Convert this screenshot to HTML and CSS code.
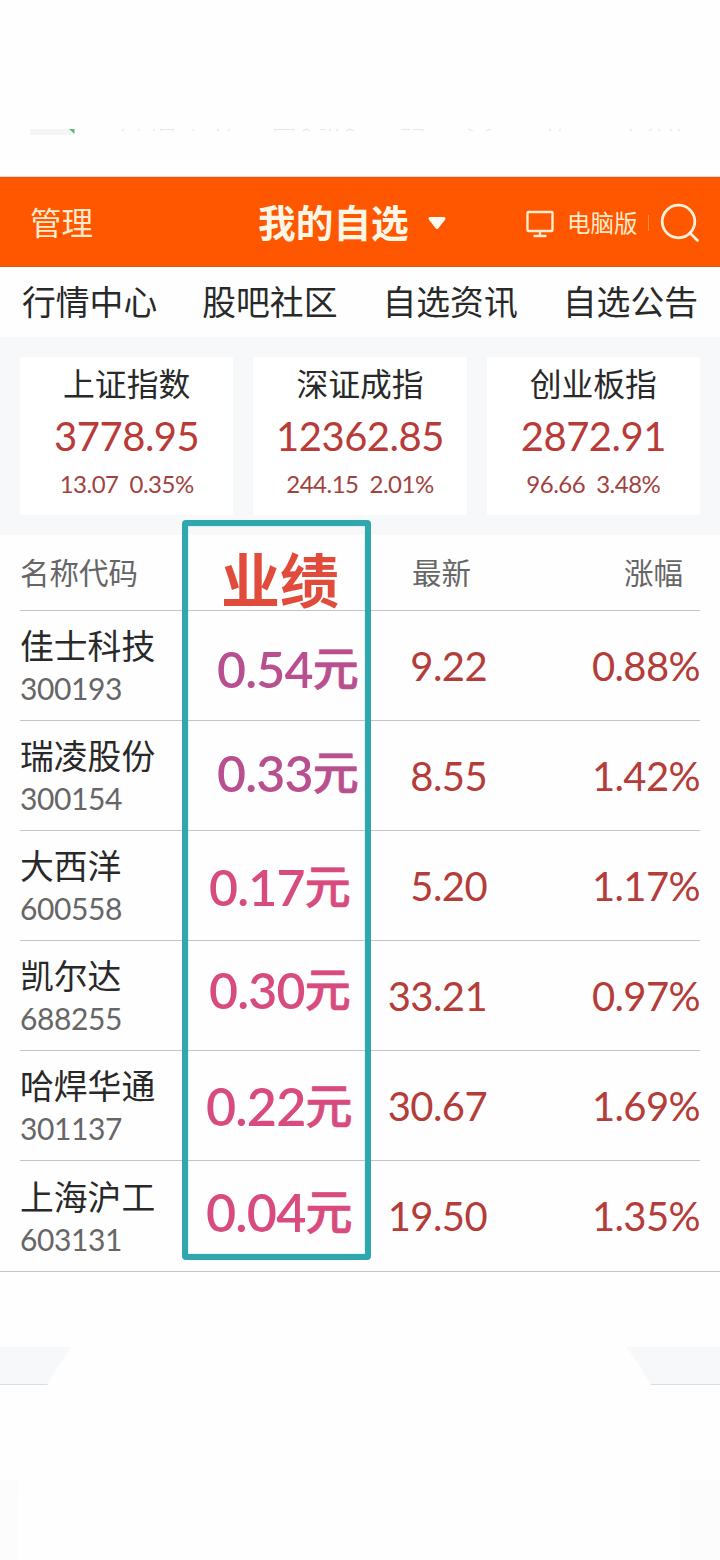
FILE: index.html
```html
<!DOCTYPE html>
<html lang="zh-CN">
<head>
<meta charset="utf-8">
<title>我的自选</title>
<link rel="stylesheet" href="styles.css">
</head>
<body>
<div class="screen">
  <div class="top-space">
    <svg class="remnants" width="720" height="10" viewBox="0 0 720 10">
      <path d="M30 1h39l5 6H30z" fill="#f3f5f6"/>
      <path d="M69 1h5.500v5z" fill="#60b77b"/>
      <g fill="none" stroke="#e6e7e8" stroke-width="1.200">
        <path d="M124 1l-2 2M139 1v2M154 1v2M160 1.500h14M161 1v2M173 1v2M193 1v2M217 1l2 2M230 1l-2 2M274 1.500h20M275 1v2M294 1v2M303 3l3-2 4 2M320 1.500h6M331 1l-2 2M338 1l-2 2M346 3l4-2 4 2M401 1.500h9M413 1.500h10M423 1v2M468 1l5 2M491 1l-5 2M549 1l2 2M561 1l-2 2M630 1l2 2M652 1l-3 2"/>
        <path d="M658 1l2 2M670 1l2 2M678 1l2 2" stroke="#f6e4d8"/>
      </g>
    </svg>
  </div>
  <header class="bar">
    <span class="manage">管理</span>
    <h1 class="title">我的自选</h1>
    <svg class="caret" width="20" height="15" viewBox="0 0 20 15"><path d="M3 2.500h14L10 11.500z" fill="#fffaf0" stroke="#fffaf0" stroke-width="3" stroke-linejoin="round"/></svg>
    <svg class="monitor" width="28" height="28" viewBox="0 0 28 28" fill="none" stroke="#ffecd0" stroke-width="2.400"><rect x="1.500" y="2" width="25" height="19" rx="1"/><path d="M14 21v4.500M7.500 26h13"/></svg>
    <span class="desktop">电脑版</span>
    <i class="sep"></i>
    <svg class="search" width="40" height="40" viewBox="0 0 40 40" fill="none" stroke="#fff0da" stroke-width="2.800" stroke-linecap="round"><circle cx="18.500" cy="18.500" r="16.300"/><path d="M30 30l7.500 7.500"/></svg>
  </header>
  <nav class="tabs"><span>行情中心</span><span>股吧社区</span><span>自选资讯</span><span>自选公告</span></nav>
  <section class="indices">
    <div class="card"><div class="card-name">上证指数</div><div class="card-value">3778.95</div><div class="card-change"><span>13.07</span><span>0.35%</span></div></div>
    <div class="card"><div class="card-name">深证成指</div><div class="card-value">12362.85</div><div class="card-change"><span>244.15</span><span>2.01%</span></div></div>
    <div class="card"><div class="card-name">创业板指</div><div class="card-value">2872.91</div><div class="card-change"><span>96.66</span><span>3.48%</span></div></div>
  </section>
  <main class="quotes">
    <div class="row head"><span class="label">名称代码</span><span class="latest">最新</span><span class="rise">涨幅</span></div>
    <div class="row"><div class="stock"><b>佳士科技</b><small>300193</small></div><span class="latest">9.22</span><span class="rise">0.88%</span></div>
    <div class="row"><div class="stock"><b>瑞凌股份</b><small>300154</small></div><span class="latest">8.55</span><span class="rise">1.42%</span></div>
    <div class="row"><div class="stock"><b>大西洋</b><small>600558</small></div><span class="latest">5.20</span><span class="rise">1.17%</span></div>
    <div class="row"><div class="stock"><b>凯尔达</b><small>688255</small></div><span class="latest">33.21</span><span class="rise">0.97%</span></div>
    <div class="row"><div class="stock"><b>哈焊华通</b><small>301137</small></div><span class="latest">30.67</span><span class="rise">1.69%</span></div>
    <div class="row last"><div class="stock"><b>上海沪工</b><small>603131</small></div><span class="latest">19.50</span><span class="rise">1.35%</span></div>
  </main>
  <div class="bottom">
    <div class="band"></div>
    <div class="foot"></div>
    <div class="oval"></div>
  </div>
  <div class="frame"></div>
  <div class="note note-title">业绩</div>
  <div class="note violet n1">0.54<em>元</em></div>
  <div class="note violet n2">0.33<em>元</em></div>
  <div class="note n3">0.17<em>元</em></div>
  <div class="note n4">0.30<em>元</em></div>
  <div class="note large n5">0.22<em>元</em></div>
  <div class="note large n6">0.04<em>元</em></div>
</div>
</body>
</html>
```
FILE: styles.css
```css
* { box-sizing: border-box; }
body { margin: 0; background: #fefefe; font-family: Lato, "Noto Sans CJK SC", sans-serif; color: #292929; }
.screen { position: relative; width: 720px; height: 1560px; overflow: hidden; }
.top-space { height: 177px; padding-top: 128px; border-bottom: 1px solid #f8d8bd; }
.remnants { display: block; }

.bar { height: 90px; display: flex; align-items: center; padding: 2px 20px 0 30px; background: #ff5600; border-top: 1px solid #d95b21; border-bottom: 1px solid #d95b21; color: #ffeacb; }
.manage { width: 228px; font-size: 31.500px; line-height: 44px; }
.title { width: 151px; margin: 0; font-size: 37.700px; line-height: 50px; font-weight: 700; color: #fff6e6; white-space: nowrap; }
.caret { margin-left: 18px; }
.monitor { margin-left: 79px; margin-top: 1px; }
.desktop { width: 72px; margin-left: 13px; font-size: 23.500px; line-height: 34px; white-space: nowrap; }
.sep { width: 1px; height: 16px; margin-left: 9px; background: #ff8747; }
.search { margin-left: 11px; flex: none; }

.tabs { height: 70px; display: flex; justify-content: space-between; padding: 0 22px; font-size: 33.800px; line-height: 70px; }

.indices { height: 198px; padding: 20px; display: grid; grid-template-columns: repeat(3, 1fr); gap: 20px; background: #f6f8fa; }
.card { background: #fff; text-align: center; white-space: nowrap; }
.card-name { font-size: 31.800px; line-height: 54px; }
.card-value { font-size: 40px; line-height: 50px; color: #b83b38; letter-spacing: -.5px; }
.card-change { display: flex; justify-content: center; gap: 11px; font-size: 24px; line-height: 46px; color: #a14240; letter-spacing: -.5px; }

.quotes { height: 737px; }
.row { display: grid; grid-template-columns: 260px 207px 213px; align-items: center; height: 110px; margin: 0 20px; border-bottom: 1px solid #c4c4c4; }
.row .latest, .row .rise { text-align: right; font-size: 40px; line-height: 50px; letter-spacing: -.6px; color: #b43c39; }
.row.head { height: 76px; font-size: 29.500px; line-height: 50px; color: #666; }
.row.head .latest, .row.head .rise { font-size: 29.500px; letter-spacing: 0; color: #666; padding-right: 16px; }
.row.head .rise { padding-right: 17px; }
.row.last { height: 111px; margin: 0; padding: 0 20px; }
.stock { display: flex; flex-direction: column; padding-bottom: 1px; }
.stock b { font-size: 33.800px; line-height: 46px; font-weight: 400; }
.stock small { font-size: 30px; line-height: 38px; letter-spacing: -.4px; color: #666; }

.bottom { position: relative; height: 288px; padding-top: 75px; overflow: hidden; }
.band { height: 38px; background: #f6f8fa; border-bottom: 1px solid #dedede; }
.foot { height: 80px; margin-top: 95px; background: #fcfcfc; }
.oval { position: absolute; left: 18px; top: -52px; width: 662px; height: 400px; border-radius: 331px 331px 0 0 / 280px 280px 0 0; background: #fefefe; clip-path: inset(127px 0 0 0); }

.frame { position: absolute; left: 182px; top: 520px; width: 189px; height: 740px; border: 6px solid #30a7af; border-radius: 4px; box-shadow: inset 0 0 2px #9fe0e3; }
.note { position: absolute; left: 209px; font-size: 50px; line-height: 60px; font-weight: 600; letter-spacing: -.8px; color: #d84b7e; white-space: nowrap; }
.note em { position: relative; top: -3px; font-style: normal; font-size: 46px; font-weight: 500; -webkit-text-stroke: .7px currentColor; }
.note-title { left: 221px; top: 541px; font-size: 59px; line-height: 80px; font-weight: 700; letter-spacing: 0; color: #e04b3b; }
.violet { left: 217px; color: #b8508f; }
.large { left: 206px; font-size: 52px; }
.large em { font-size: 47px; }
.n1 { top: 639px; }
.n2 { top: 743px; }
.n3 { top: 857px; }
.n4 { top: 960px; }
.n5 { top: 1076px; }
.n6 { top: 1182px; }
```
